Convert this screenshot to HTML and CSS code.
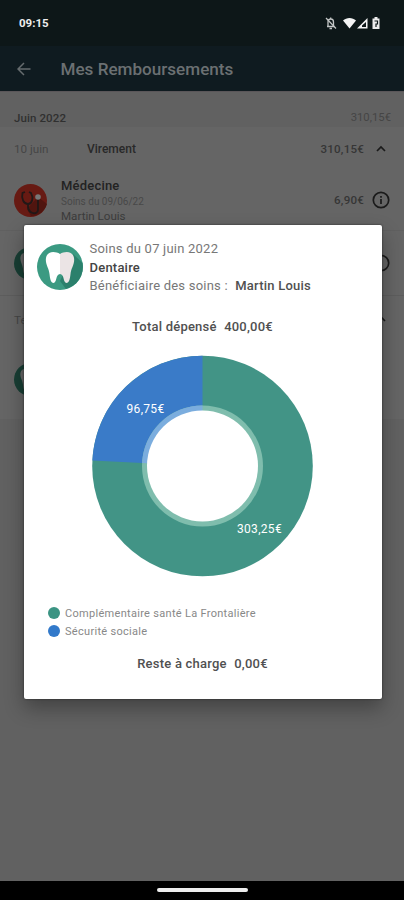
FILE: index.html
```html
<!DOCTYPE html>
<html lang="fr">
<head>
    <meta charset="UTF-8">
    <meta name="viewport" content="width=device-width, initial-scale=1.0">
    <title>Mes Remboursements</title>
    <link rel="stylesheet" href="styles.css">
</head>
<body>
    <svg class="symbols">
        <symbol id="tooth" viewBox="0 0 46 46">
            <circle cx="23" cy="23" r="23" fill="#3b9a82"/>
            <path d="M36 10L45.5 19A23 23 0 0 1 29 45L23 37Z" fill="#2b806c"/>
            <path d="M23 10C18 7 10 7 9 14C8 20 12 24 12.500 30C13 35 14 39 16.500 39C20 39 18.500 30 23 30Z" fill="#fff"/>
            <path d="M23 10C28 7 36 7 37 14C38 20 34 24 33.500 30C33 35 32 39 29.500 39C26 39 27.500 30 23 30Z" fill="#ebe4e5"/>
        </symbol>
        <symbol id="info" viewBox="0 0 18 18">
            <circle cx="9" cy="9" r="7.700" fill="none" stroke="#1a1a1a" stroke-width="1.700"/>
            <path d="M9 8V13M9 5V6.700" stroke="#1a1a1a" stroke-width="1.700"/>
        </symbol>
        <symbol id="chevron" viewBox="0 0 10 7">
            <path d="M1 6L5 2L9 6" fill="none" stroke="#1a1a1a" stroke-width="1.700"/>
        </symbol>
    </svg>

    <div class="screen">
        <div class="status-bar">
            <span class="clock">09:15</span>
            <svg class="status-icons" width="56" height="14" viewBox="0 0 56 14">
                <path d="M4 10V6C4 2 9.500 2 9.500 6V10M3 10.500H10.500M5.500 12.500H8M6.700 3V1.500" fill="none" stroke="#c3c6c6" stroke-width="1.300"/>
                <path d="M2 2L12 12.500" stroke="#c3c6c6" stroke-width="1.200"/>
                <path d="M19 4.500C22.500 1 28.500 1 32 4.500L25.500 12.500Z" fill="#f4f4f4"/>
                <path d="M43.500 2V12.500H33Z" fill="#f4f4f4"/>
                <path d="M42 6V11H38V9.500Z" fill="#0d1718"/>
                <path d="M48.500 2.500H50.500V1H53.500V2.500H55.500V13H48.500V2.500Z" fill="#ececec"/>
                <path d="M50.500 5H53.500V8H52V11" fill="none" stroke="#0d1718" stroke-width="1.200"/>
            </svg>
        </div>

        <div class="app-bar">
            <svg width="14" height="14" viewBox="0 0 14 14">
                <path d="M13.500 7H1.500M7 1L1 7L7 13" fill="none" stroke="#666c6e" stroke-width="1.500"/>
            </svg>
            <h1 class="app-title">Mes Remboursements</h1>
        </div>

        <div class="list">
            <div class="month">
                <span class="month-name">Juin 2022</span>
                <span class="month-total">310,15€</span>
            </div>
            <div class="transfer">
                <span class="transfer-date">10 juin</span>
                <span class="transfer-label">Virement</span>
                <span class="amount">310,15€</span>
                <svg class="chevron"><use href="#chevron"/></svg>
            </div>
            <div class="care care-first">
                <svg class="care-icon" viewBox="0 0 33 33">
                    <circle cx="16.500" cy="16.500" r="16.500" fill="#671a13"/>
                    <path d="M17 32L13 25L24 13L33 20A16.500 16.500 0 0 1 17 32Z" fill="#50150f"/>
                    <path d="M11 8L8.500 9C7 15 10 20 14 20C18 20 20 14 17 9L15 8M14 20C13 31 24 31 24 26V15" fill="none" stroke="#211817" stroke-width="1.800"/>
                    <circle cx="24" cy="13" r="2.800" fill="#777"/>
                </svg>
                <div class="care-text">
                    <div class="care-name">Médecine</div>
                    <div class="care-date">Soins du 09/06/22</div>
                    <div class="care-person">Martin Louis</div>
                </div>
                <span class="amount">6,90€</span>
                <svg class="info"><use href="#info"/></svg>
            </div>
            <div class="care">
                <svg class="care-icon dimmed"><use href="#tooth"/></svg>
                <svg class="info"><use href="#info"/></svg>
            </div>
            <div class="transfer transfer-next">
                <span class="transfer-date">Te</span>
                <svg class="chevron"><use href="#chevron"/></svg>
            </div>
            <div class="care care-last">
                <svg class="care-icon dimmed"><use href="#tooth"/></svg>
            </div>
        </div>

        <div class="nav-bar"><div class="handle"></div></div>
    </div>

    <div class="dialog">
        <div class="dialog-header">
            <svg class="dialog-icon"><use href="#tooth"/></svg>
            <div class="dialog-text">
                <div class="dialog-date">Soins du 07 juin 2022</div>
                <div class="dialog-name">Dentaire</div>
                <div class="dialog-person">Bénéficiaire des soins : <b>Martin Louis</b></div>
            </div>
        </div>
        <div class="total"><span>Total dépensé</span><span>400,00€</span></div>
        <svg class="chart" width="222" height="222" viewBox="-110.5 -111 222 222">
            <circle r="110.300" fill="#429486"/>
            <path d="M0 0L-110.150 -5.600A110.300 110.300 0 0 1 0 -110.300Z" fill="#3a7bc8"/>
            <circle r="60.500" fill="#7fbdad"/>
            <path d="M0 0L-60.400 -3.100A60.500 60.500 0 0 1 0 -60.500Z" fill="#7badde"/>
            <circle r="55.500" fill="#fff"/>
            <text class="value" x="-57" y="-53.500">96,75€</text>
            <text class="value" x="57" y="66.500">303,25€</text>
        </svg>
        <div class="legend">
            <div class="legend-item"><span class="dot green"></span><span>Complémentaire santé La Frontalière</span></div>
            <div class="legend-item"><span class="dot blue"></span><span>Sécurité sociale</span></div>
        </div>
        <div class="total rest"><span>Reste à charge</span><span>0,00€</span></div>
    </div>
</body>
</html>
```
FILE: styles.css
```css
* {
    margin: 0;
    padding: 0;
    box-sizing: border-box;
}

body {
    font-family: Roboto, "Liberation Sans", sans-serif;
    background: #616161;
    width: 404px;
    height: 900px;
    position: relative;
    overflow: hidden;
}

svg {
    display: block;
    flex-shrink: 0;
}

.symbols {
    position: absolute;
    width: 0;
    height: 0;
}

.screen {
    height: 900px;
    display: flex;
    flex-direction: column;
}

.status-bar {
    height: 46px;
    background: #0d1718;
    display: flex;
    align-items: center;
    justify-content: space-between;
    padding: 0 24px 0 19px;
}

.clock {
    color: #eee;
    font-size: 11.5px;
    font-weight: 700;
}

.app-bar {
    height: 45px;
    background: #0f1b20;
    display: flex;
    align-items: center;
    gap: 29.5px;
    padding-left: 17px;
}

.app-title {
    color: #6b7072;
    font-size: 17.1px;
    font-weight: 500;
}

.list {
    height: 328px;
    background: #656565;
    color: #363636;
    font-size: 12px;
}

.month {
    height: 36px;
    background: #616161;
    border-top: 1px solid #5a5659;
    display: flex;
    align-items: center;
    justify-content: space-between;
    padding: 16px 13px 0 14px;
    font-size: 11.5px;
}

.month-name {
    font-weight: 500;
    color: #303030;
    letter-spacing: 0.1px;
}

.month-total {
    color: #454545;
    font-size: 11.3px;
}

.transfer {
    height: 44px;
    display: flex;
    align-items: center;
    padding: 0 18px 0 14px;
}

.transfer-date {
    width: 73px;
    color: #454545;
    font-size: 11.7px;
}

.transfer-label {
    font-weight: 500;
    color: #292929;
}

.chevron {
    width: 10px;
    height: 7px;
    margin: 0 0 2px 12px;
}

.transfer-date + .chevron {
    margin-left: auto;
}

.amount {
    margin-left: auto;
    font-size: 11.6px;
    font-weight: 500;
    letter-spacing: 0.2px;
}

.transfer-next {
    height: 48px;
    border-top: 1px solid #5d5d5d;
}

.care {
    height: 65px;
    border-top: 1px solid #606060;
    display: flex;
    align-items: center;
    padding: 0 14px;
}

.care-first {
    height: 59px;
    border-top: none;
    padding-bottom: 1px;
}

.care-last {
    height: 72px;
    border-top: none;
}

.care-icon {
    width: 33px;
    height: 33px;
}

.dimmed {
    filter: brightness(0.4);
}

.care-text {
    margin-left: 14px;
    padding-top: 2px;
}

.care-name {
    font-size: 13px;
    font-weight: 500;
    line-height: 16px;
    letter-spacing: 0.2px;
    color: #222;
}

.care-date {
    font-size: 10px;
    line-height: 15px;
    color: #484848;
}

.care-person {
    font-size: 11.6px;
    line-height: 15px;
    color: #3c3c3c;
}

.info {
    width: 18px;
    height: 18px;
    margin-left: 8px;
}

.dimmed + .info {
    margin-left: auto;
}

.nav-bar {
    height: 19px;
    margin-top: auto;
    background: #000;
    display: flex;
    justify-content: center;
    padding-top: 7px;
}

.handle {
    width: 91px;
    height: 4px;
    border-radius: 2px;
    background: #eee;
}

.dialog {
    position: absolute;
    left: 23.5px;
    top: 225px;
    width: 358px;
    height: 474px;
    background: #fff;
    border-radius: 2px;
    box-shadow: 0 0 2px #222, 0 9px 20px rgba(0, 0, 0, 0.32);
    color: #505050;
}

.dialog-header {
    display: flex;
    padding: 15px 0 0 13.5px;
}

.dialog-icon {
    width: 46px;
    height: 46px;
    margin-top: 4px;
}

.dialog-text {
    margin-left: 6.5px;
    font-size: 13px;
    line-height: 18.5px;
    letter-spacing: 0.22px;
    color: #777;
}

.dialog-name {
    color: #444;
    font-weight: 500;
}

.dialog-text b {
    color: #505050;
    font-weight: 500;
    margin-left: 4px;
}

.total {
    display: flex;
    justify-content: center;
    gap: 7.5px;
    margin-top: 22px;
    font-size: 13px;
    line-height: 18px;
    letter-spacing: 0.22px;
    font-weight: 500;
}

.chart {
    margin: 19px 0 0 68px;
}

.value {
    fill: #fff;
    font-size: 12px;
    letter-spacing: 0.3px;
    text-anchor: middle;
}

.legend {
    margin: 27.5px 0 0 24.5px;
    font-size: 11px;
    letter-spacing: 0.3px;
    color: #888;
}

.legend-item {
    height: 18px;
    display: flex;
    align-items: center;
    gap: 5px;
}

.dot {
    width: 12px;
    height: 12px;
    border-radius: 50%;
}

.green {
    background: #3b9483;
}

.blue {
    background: #3279ca;
}

.rest {
    margin-top: 15px;
}
```
